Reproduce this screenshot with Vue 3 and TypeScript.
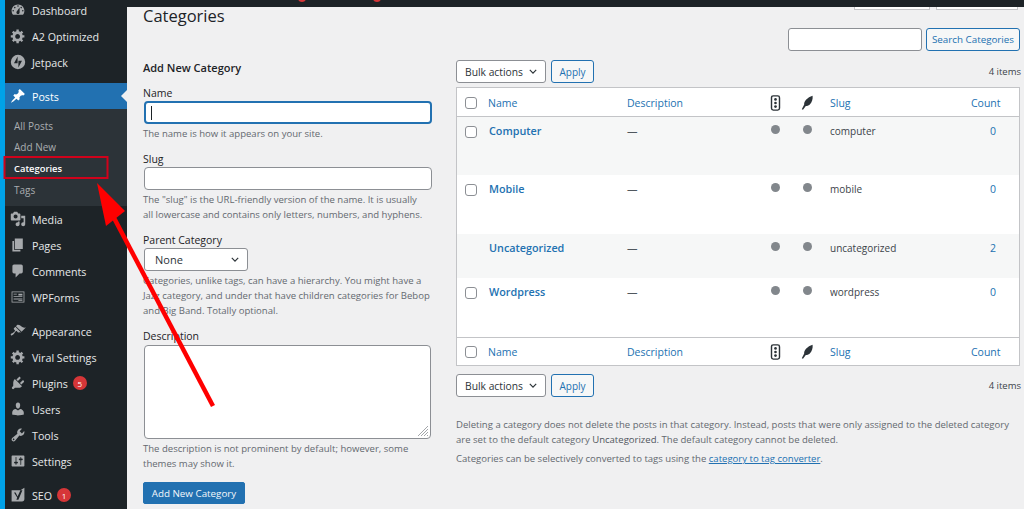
<script setup lang="ts">
interface MenuItem {
  label: string;
  icon: string;
  gapBefore?: boolean;
  badge?: string;
  active?: boolean;
  rule?: "evenodd";
}

const gear =
  "M18 12h-2.18c-.17.7-.44 1.35-.81 1.93l1.54 1.54-2.1 2.1-1.54-1.54c-.58.36-1.23.63-1.91.79V19H8v-2.18c-.68-.16-1.33-.43-1.91-.79l-1.54 1.54-2.12-2.12 1.54-1.54c-.36-.58-.63-1.23-.79-1.91H1V9.03h2.17c.16-.7.44-1.35.8-1.94L2.43 5.55l2.1-2.1 1.54 1.54c.58-.37 1.24-.64 1.93-.81V2h3v2.18c.68.16 1.33.43 1.91.79l1.54-1.54 2.12 2.12-1.54 1.54c.36.59.64 1.24.8 1.94H18V12zm-8.5 1.5c1.66 0 3-1.34 3-3s-1.34-3-3-3-3 1.34-3 3 1.34 3 3 3z";

const topMenu: MenuItem[] = [
  { label: "Dashboard", icon: "M3.76 16h12.48c1.1-1.37 1.76-3.11 1.76-5 0-4.42-3.58-8-8-8s-8 3.58-8 8c0 1.89.66 3.63 1.76 5zM10 4c.55 0 1 .45 1 1s-.45 1-1 1-1-.45-1-1 .45-1 1-1zM6 6c.55 0 1 .45 1 1s-.45 1-1 1-1-.45-1-1 .45-1 1-1zm8 0c.55 0 1 .45 1 1s-.45 1-1 1-1-.45-1-1 .45-1 1-1zm-5.37 5.55L12 7v6c0 1.1-.9 2-2 2s-2-.9-2-2c0-.57.24-1.08.63-1.45zM4 10c.55 0 1 .45 1 1s-.45 1-1 1-1-.45-1-1 .45-1 1-1zm12 0c.55 0 1 .45 1 1s-.45 1-1 1-1-.45-1-1 .45-1 1-1z" },
  { label: "A2 Optimized", icon: gear },
  { label: "Jetpack", icon: "M10 1a9 9 0 1 0 0 18 9 9 0 0 0 0-18zM9.5 11.5H5L9.5 3v8.5zm1 5.5V8.5H15L10.5 17z", rule: "evenodd" },
  { label: "Posts", gapBefore: true, active: true, icon: "M10.44 3.02l1.82-1.82 6.36 6.35-1.83 1.82c-1.05-.68-2.48-.57-3.41.36l-.75.75c-.92.93-1.04 2.35-.35 3.41l-1.83 1.82-2.41-2.41-2.8 2.79c-.42.42-3.38 2.71-3.8 2.29s1.86-3.39 2.28-3.81l2.79-2.79L4.1 9.36l1.83-1.82c1.05.69 2.48.57 3.4-.36l.75-.75c.93-.92 1.05-2.35.36-3.41z" },
];

const bottomMenu: MenuItem[] = [
  { label: "Media", icon: "M13 11V4c0-.55-.45-1-1-1h-1.67L9 1H5L3.67 3H2c-.55 0-1 .45-1 1v7c0 .55.45 1 1 1h10c.55 0 1-.45 1-1zM7 4.5c1.38 0 2.5 1.12 2.5 2.5S8.38 9.5 7 9.5 4.5 8.38 4.5 7 5.62 4.5 7 4.5zM14 6h5v10.5c0 1.38-1.12 2.5-2.5 2.5S14 17.88 14 16.5s1.12-2.5 2.5-2.5c.17 0 .34.02.5.05V9h-3V6zm-4 8.05V13h2v3.5c0 1.38-1.12 2.5-2.5 2.5S7 17.88 7 16.5 8.12 14 9.5 14c.17 0 .34.02.5.05z" },
  { label: "Pages", icon: "M6 15V2h10v13H6zm-1 1h8v2H3V5h2v11z" },
  { label: "Comments", icon: "M5 2h9c1.1 0 2 .9 2 2v7c0 1.1-.9 2-2 2h-2l-5 5v-5H5c-1.1 0-2-.9-2-2V4c0-1.1.9-2 2-2z" },
  { label: "WPForms", rule: "evenodd", icon: "M2 3h16v14H2zM3 4v12h14V4zM4.5 6h4v1h-4zm6 0h5v2h-5zm-6 3h11v1h-11zm0 3h11v1h-11zm6 2h5v1h-5z" },
  { label: "Appearance", gapBefore: true, icon: "M14.48 11.06L7.41 3.99l1.5-1.5c.5-.56 2.3-.47 3.51.32 1.21.8 1.43 1.28 2.91 2.1 1.18.64 2.45 1.26 4.45.85zm-.71.71L6.7 4.7 4.93 6.47c-.39.39-.39 1.02 0 1.41l1.06 1.06c.39.39.39 1.03 0 1.42-.6.6-1.43 1.11-2.21 1.69-.35.26-.7.53-1.01.84C1.43 13.23.4 14.4 1.21 15.2c.8.8 2.18-.2 3.53-1.55.31-.31.58-.66.84-1.01.58-.78 1.09-1.61 1.69-2.21.39-.39 1.02-.39 1.41 0l1.06 1.06c.39.39 1.02.39 1.41 0z" },
  { label: "Viral Settings", icon: gear },
  { label: "Plugins", badge: "5", icon: "M13.11 4.36L9.87 7.6 8 5.73l3.24-3.24c.35-.34 1.05-.2 1.56.32.52.51.66 1.21.31 1.55zm-8 1.77l.91-1.12 9.01 9.01-1.19.84c-.71.71-2.63 1.16-3.82 1.16H6.14L4.9 17.26c-.59.59-1.54.59-2.12 0-.59-.58-.59-1.53 0-2.12l1.24-1.24v-3.88c0-1.13.4-3.19 1.09-3.89zm7.26 3.97l3.24-3.24c.34-.35 1.04-.21 1.55.31.52.51.66 1.21.31 1.55l-3.24 3.25z" },
  { label: "Users", icon: "M10 9.25c-2.27 0-2.73-3.44-2.73-3.44C7 4.02 7.82 2 9.97 2c2.16 0 2.98 2.02 2.71 3.81 0 0-.41 3.44-2.68 3.44zm0 2.57L12.72 10c2.39 0 4.52 2.33 4.52 4.53v2.49s-3.65 1.13-7.24 1.13c-3.65 0-7.24-1.13-7.24-1.13v-2.49c0-2.25 1.94-4.48 4.47-4.48z" },
  { label: "Tools", icon: "M16.68 9.77c-1.34 1.34-3.3 1.67-4.95.99l-5.41 6.52c-.99.99-2.59.99-3.58 0s-.99-2.59 0-3.57l6.52-5.42c-.68-1.65-.35-3.61.99-4.95 1.28-1.28 3.12-1.62 4.72-1.06l-2.89 2.89 2.82 2.82 2.86-2.87c.53 1.58.18 3.39-1.08 4.65zM3.81 16.21c.4.39 1.04.39 1.43 0 .4-.4.4-1.04 0-1.43-.39-.4-1.03-.4-1.43 0-.39.39-.39 1.03 0 1.43z" },
  { label: "Settings", icon: "M18 16V4c0-.55-.45-1-1-1H3c-.55 0-1 .45-1 1v12c0 .55.45 1 1 1h14c.55 0 1-.45 1-1zM8 11h1c.55 0 1 .45 1 1s-.45 1-1 1H8v1.5c0 .28-.22.5-.5.5s-.5-.22-.5-.5V13H6c-.55 0-1-.45-1-1s.45-1 1-1h1V5.5c0-.28.22-.5.5-.5s.5.22.5.5V11zm5-2h-1c-.55 0-1-.45-1-1s.45-1 1-1h1V5.5c0-.28.22-.5.5-.5s.5.22.5.5V7h1c.55 0 1 .45 1 1s-.45 1-1 1h-1v5.5c0 .28-.22.5-.5.5s-.5-.22-.5-.5V9z" },
  { label: "SEO", gapBefore: true, badge: "1", rule: "evenodd", icon: "M2 4h11l5-3v14c0 1.5-1 3-3 3H2zM7 7l2.5 5L13 4h2.5l-5 12H8l1-3-4-6z" },
];

const subMenu = ["All Posts", "Add New", "Categories", "Tags"];

const categories = [
  { name: "Computer", slug: "computer", count: 0, rowClass: "row-a alt", check: true },
  { name: "Mobile", slug: "mobile", count: 0, rowClass: "row-b", check: true },
  { name: "Uncategorized", slug: "uncategorized", count: 2, rowClass: "row-c alt", check: false },
  { name: "Wordpress", slug: "wordpress", count: 0, rowClass: "row-b", check: true },
];

const featherPath = "M17 1c.5 4-.8 8.500-3.500 11-1.700 1.500-3.500 2-5 1.800L5 18.500l-1.500-.8L6.500 12C6 8 10.500 3 17 1z";
</script>

<template>
  <div class="page">
    <div class="edge"></div>

    <aside class="sidebar">
      <ul class="menu">
        <li v-for="item in topMenu" :key="item.label" :class="['menu-item', { gap: item.gapBefore, active: item.active }]">
          <svg class="menu-icon" viewBox="0 0 20 20"><path :d="item.icon" :fill-rule="item.rule" /></svg>
          <span class="menu-label">{{ item.label }}</span>
        </li>
      </ul>
      <ul class="submenu">
        <li v-for="sub in subMenu" :key="sub" :class="{ current: sub === 'Categories' }">{{ sub }}</li>
      </ul>
      <ul class="menu">
        <li v-for="item in bottomMenu" :key="item.label" :class="['menu-item', { gap: item.gapBefore }]">
          <svg class="menu-icon" viewBox="0 0 20 20"><path :d="item.icon" :fill-rule="item.rule" /></svg>
          <span class="menu-label">{{ item.label }}</span>
          <b v-if="item.badge" class="badge">{{ item.badge }}</b>
        </li>
      </ul>
    </aside>

    <div class="main">
      <div class="adminbar">
        <i class="bar-dot dot-a"></i>
        <i class="bar-dot dot-b"></i>
      </div>
      <div class="screen-tabs">
        <span class="tab tab-a"></span>
        <span class="tab tab-b"></span>
      </div>

      <div class="content">
        <h1 class="title">Categories</h1>

        <div class="columns">
          <form class="col-left" @submit.prevent>
            <h2 class="add-title">Add New Category</h2>

            <label class="field-label">Name</label>
            <div class="input focused"><span class="caret"></span></div>
            <p class="help">The name is how it appears on your site.</p>

            <label class="field-label spaced">Slug</label>
            <div class="input"></div>
            <p class="help">The "slug" is the URL-friendly version of the name. It is usually<br />all lowercase and contains only letters, numbers, and hyphens.</p>

            <label class="field-label spaced">Parent Category</label>
            <div class="select parent">None<svg class="chev" viewBox="0 0 10 6"><path d="M1 1l4 4 4-4" /></svg></div>
            <p class="help">Categories, unlike tags, can have a hierarchy. You might have a Jazz category, and under that have children categories for Bebop and Big Band. Totally optional.</p>

            <label class="field-label spaced">Description</label>
            <div class="textarea">
              <svg class="grip" viewBox="0 0 12 12"><path d="M11 1L1 11M11 4L4 11M11 7L7 11M11 10l-1 1" /></svg>
            </div>
            <p class="help">The description is not prominent by default; however, some themes may show it.</p>

            <button class="primary" type="button">Add New Category</button>
          </form>

          <div class="col-right">
            <div class="search">
              <div class="search-input"></div>
              <button class="secondary search-btn" type="button">Search Categories</button>
            </div>

            <div class="tablenav">
              <div class="select bulk">Bulk actions<svg class="chev" viewBox="0 0 10 6"><path d="M1 1l4 4 4-4" /></svg></div>
              <button class="secondary" type="button">Apply</button>
              <span class="count-label">4 items</span>
            </div>

            <table class="cats">
              <thead>
                <tr>
                  <th class="c-check"><span class="box"></span></th>
                  <th class="c-name">Name</th>
                  <th class="c-desc">Description</th>
                  <th class="c-dot"><svg class="th-icon" viewBox="0 0 12 18"><rect x="1.500" y="1" width="9" height="16" rx="2" fill="none" stroke="#2c3338" stroke-width="1.600" /><circle cx="6" cy="5" r="1.500" /><circle cx="6" cy="9" r="1.500" /><circle cx="6" cy="13" r="1.500" /></svg></th>
                  <th class="c-dot"><svg class="th-icon feather" viewBox="0 0 20 20"><path :d="featherPath" /></svg></th>
                  <th class="c-slug">Slug</th>
                  <th class="c-count">Count</th>
                </tr>
              </thead>
              <tbody>
                <tr v-for="cat in categories" :key="cat.name" :class="cat.rowClass">
                  <td class="c-check"><span v-if="cat.check" class="box"></span></td>
                  <td class="c-name"><a class="cat-link">{{ cat.name }}</a></td>
                  <td class="c-desc dash">—</td>
                  <td class="c-dot"><i class="dot"></i></td>
                  <td class="c-dot"><i class="dot"></i></td>
                  <td class="c-slug slug-text">{{ cat.slug }}</td>
                  <td class="c-count num">{{ cat.count }}</td>
                </tr>
              </tbody>
              <tfoot>
                <tr>
                  <th class="c-check"><span class="box"></span></th>
                  <th class="c-name">Name</th>
                  <th class="c-desc">Description</th>
                  <th class="c-dot"><svg class="th-icon" viewBox="0 0 12 18"><rect x="1.500" y="1" width="9" height="16" rx="2" fill="none" stroke="#2c3338" stroke-width="1.600" /><circle cx="6" cy="5" r="1.500" /><circle cx="6" cy="9" r="1.500" /><circle cx="6" cy="13" r="1.500" /></svg></th>
                  <th class="c-dot"><svg class="th-icon feather" viewBox="0 0 20 20"><path :d="featherPath" /></svg></th>
                  <th class="c-slug">Slug</th>
                  <th class="c-count">Count</th>
                </tr>
              </tfoot>
            </table>

            <div class="tablenav lower">
              <div class="select bulk">Bulk actions<svg class="chev" viewBox="0 0 10 6"><path d="M1 1l4 4 4-4" /></svg></div>
              <button class="secondary" type="button">Apply</button>
              <span class="count-label">4 items</span>
            </div>

            <div class="notes">
              <p>Deleting a category does not delete the posts in that category. Instead, posts that were only assigned to the deleted category are set to the default category <strong>Uncategorized</strong>. The default category cannot be deleted.</p>
              <p class="note-second">Categories can be selectively converted to tags using the <a>category to tag converter</a>.</p>
            </div>
          </div>
        </div>
      </div>
    </div>

    <!-- annotation drawn over the screenshot -->
    <svg class="annotation" viewBox="0 0 1024 509">
      <rect x="4.500" y="157" width="103" height="21" fill="none" stroke="#d0021b" stroke-width="2" />
      <path d="M213 406L113 216" stroke="#f00" stroke-width="4.500" fill="none" />
      <path d="M97 183L125 211L106 226z" fill="#f00" />
    </svg>
  </div>
</template>

<style>
html,
body {
  margin: 0;
  background: #f0f0f1;
}
</style>

<style scoped>
.page {
  position: relative;
  display: flex;
  width: 1024px;
  height: 509px;
  overflow: hidden;
  font-family: "Open Sans", "Noto Sans", sans-serif;
  font-size: 10.5px;
  color: #3c434a;
  background: #f0f0f1;
}

.edge {
  flex: none;
  width: 5px;
  background: #00a2e8;
}

.sidebar {
  flex: none;
  width: 122px;
  background: #1d2327;
  color: #e6e8e9;
}

.menu,
.submenu {
  list-style: none;
  margin: 0;
  padding: 0;
}

.sidebar > .menu:first-child {
  margin-top: -3px;
}

.menu-item {
  position: relative;
  display: flex;
  align-items: center;
  height: 26px;
  padding-left: 5px;
  font-size: 10.7px;
}

.menu-item.gap {
  margin-top: 8px;
}

.menu-label {
  margin-top: 2px;
}

.menu-icon {
  flex: none;
  width: 16px;
  height: 16px;
  margin-right: 6px;
  fill: #a7aaad;
}

.menu-item.active {
  background: #2271b1;
  color: #fff;
}

.menu-item.active .menu-icon {
  fill: #fff;
}

.menu-item.active::after {
  content: "";
  position: absolute;
  right: 0;
  top: 7px;
  border: 6px solid transparent;
  border-right-color: #f0f0f1;
}

.badge {
  display: inline-flex;
  align-items: center;
  justify-content: center;
  width: 14px;
  height: 14px;
  margin-left: 5px;
  border-radius: 50%;
  background: #d63638;
  color: #fff;
  font-size: 8px;
  font-weight: 400;
}

.submenu {
  height: 97px;
  padding-top: 7px;
  box-sizing: border-box;
  background: #2c3338;
  color: #a9adb0;
  font-size: 10px;
}

.submenu li {
  height: 21.300px;
  line-height: 21.300px;
  padding-left: 9px;
}

.submenu .current {
  color: #fff;
  font-size: 9.400px;
  font-weight: 600;
  line-height: 20px;
}

.main {
  position: relative;
  flex: 1;
  min-width: 0;
}

.adminbar {
  position: relative;
  height: 7px;
  overflow: hidden;
  background: #1d2327;
}

.bar-dot {
  position: absolute;
  top: -6px;
  width: 8px;
  height: 8px;
  border-radius: 50%;
  background: #d63638;
}

.dot-a {
  left: 171px;
}

.dot-b {
  left: 246px;
}

.screen-tabs .tab {
  position: absolute;
  top: 7px;
  height: 3px;
  box-sizing: border-box;
  border: 1px solid #c3c4c7;
  border-top: 0;
  background: #fff;
}

.tab-a {
  left: 727px;
  width: 76px;
}

.tab-b {
  left: 809px;
  width: 82px;
}

.content {
  padding: 0 4px 0 16px;
}

.title {
  margin: 0;
  height: 21px;
  font-size: 16.500px;
  font-weight: 400;
  line-height: 17px;
  color: #1d2327;
}

.columns {
  display: flex;
}

.col-left {
  flex: none;
  width: 289px;
  margin-right: 24px;
  padding-top: 32px;
}

.col-right {
  flex: 1;
  min-width: 0;
}

.add-title {
  margin: 0 0 10px;
  font-size: 11px;
  font-weight: 600;
  line-height: 16px;
  color: #1d2327;
}

.field-label {
  display: block;
  height: 14px;
  line-height: 14px;
  color: #1d2327;
}

.field-label.spaced {
  margin-top: 11px;
}

.input {
  display: flex;
  align-items: center;
  height: 23px;
  margin: 1px 0 0 1px;
  box-sizing: border-box;
  border: 1px solid #8c8f94;
  border-radius: 4px;
  background: #fff;
}

.input.focused {
  border: 2px solid #2271b1;
}

.caret {
  width: 1px;
  height: 14px;
  margin-left: 5px;
  background: #1d2327;
}

.help {
  margin: 2px 0 0;
  font-size: 9.550px;
  line-height: 15px;
  color: #646970;
}

.select {
  position: relative;
  display: flex;
  align-items: center;
  box-sizing: border-box;
  height: 23px;
  border: 1px solid #8c8f94;
  border-radius: 3px;
  background: #fff;
  color: #2c3338;
}

.select.parent {
  width: 104px;
  margin: 1px 0 0 1px;
  padding-left: 10px;
  font-size: 11px;
}

.select.bulk {
  width: 90px;
  padding-left: 8px;
  font-size: 10.300px;
}

.chev {
  position: absolute;
  right: 8px;
  top: 8px;
  width: 8px;
  height: 5px;
  fill: none;
  stroke: #2c3338;
  stroke-width: 1.500;
}

.textarea {
  position: relative;
  height: 94px;
  width: 287px;
  margin: 2px 0 0 1px;
  box-sizing: border-box;
  border: 1px solid #8c8f94;
  border-radius: 4px;
  background: #fff;
}

.grip {
  position: absolute;
  right: 1px;
  bottom: 1px;
  width: 12px;
  height: 12px;
  fill: none;
  stroke: #8c8f94;
  stroke-width: 0.800;
}

.primary {
  display: block;
  width: 102px;
  height: 22px;
  margin-top: 11px;
  padding: 0;
  border: 1px solid #2271b1;
  border-radius: 2px;
  background: #2271b1;
  color: #f2f7fb;
  font: inherit;
  font-size: 9.800px;
}

.secondary {
  height: 23px;
  padding: 0 7px;
  border: 1px solid #2271b1;
  border-radius: 3px;
  background: #f6f7f7;
  color: #2271b1;
  font: inherit;
  font-size: 10px;
}

.search {
  display: flex;
  justify-content: flex-end;
  gap: 4px;
}

.search-input {
  box-sizing: border-box;
  width: 134px;
  height: 23px;
  border: 1px solid #8c8f94;
  border-radius: 3px;
  background: #fff;
}

.search-btn {
  width: 94px;
  padding: 0;
  font-size: 9.800px;
}

.tablenav {
  display: flex;
  align-items: center;
  gap: 5px;
  margin-top: 9px;
}

.tablenav .secondary {
  width: 43px;
  padding: 0;
}

.count-label {
  margin-left: auto;
  margin-right: -1px;
  font-size: 9.500px;
}

.tablenav.lower {
  margin-top: 8px;
}

.cats {
  width: 564px;
  margin-top: 4px;
  border: 1px solid #c3c4c7;
  border-spacing: 0;
  border-collapse: separate;
  table-layout: fixed;
  background: #fff;
}

.cats th {
  height: 28px;
  padding: 0;
  font-weight: 400;
  text-align: left;
  color: #2271b1;
  vertical-align: middle;
}

.cats thead th {
  height: 29px;
  padding-top: 2px;
  border-bottom: 1px solid #c3c4c7;
}

.cats tfoot th {
  border-top: 1px solid #c3c4c7;
}

.cats td {
  padding: 7px 0 0;
  vertical-align: top;
  line-height: 15px;
}

.alt td {
  background: #f6f7f7;
}

/* cells are border-box, so these heights include the padding */
.row-a td {
  height: 58px;
}

.row-b td {
  height: 59px;
}

.row-c td {
  height: 44px;
}

.c-check {
  width: 25px;
  padding-left: 8px !important;
  box-sizing: border-box;
}

.c-name {
  width: 139px;
  padding-left: 6px !important;
  box-sizing: border-box;
}

.cats td.c-name {
  padding-top: 6px;
  padding-left: 7px !important;
}

.c-desc {
  width: 139px;
  padding-left: 6px !important;
  box-sizing: border-box;
}

.c-dot {
  width: 32px;
  padding-right: 2px !important;
  box-sizing: border-box;
  text-align: center !important;
}

.c-slug {
  width: 141px;
  padding-left: 6px !important;
  box-sizing: border-box;
}

.c-count {
  padding-left: 6px !important;
  box-sizing: border-box;
}

.box {
  display: block;
  box-sizing: border-box;
  width: 12px;
  height: 12px;
  border: 1px solid #8c8f94;
  border-radius: 3px;
  background: #fff;
}

.cats td .box {
  margin-top: 2px;
}

.cat-link {
  font-size: 10.800px;
  font-weight: 600;
  color: #2271b1;
}

.dash {
  color: #50575e;
}

.slug-text {
  font-size: 10px;
}

.num {
  padding-left: 25px !important;
  color: #2271b1;
}

.dot {
  display: block;
  width: 9px;
  height: 9px;
  margin: 1px auto 0;
  border-radius: 50%;
  background: #82878c;
}

.th-icon {
  display: block;
  width: 11px;
  height: 16px;
  margin: 0 auto;
  fill: #2c3338;
}

.th-icon.feather {
  width: 16px;
}

.notes {
  margin-top: 20px;
  font-size: 9.550px;
  line-height: 15px;
  color: #646970;
}

.notes p {
  margin: 0;
}

.notes .note-second {
  margin-top: 4px;
}

.notes strong {
  font-weight: 400;
  color: #50575e;
}

.notes a {
  color: #2271b1;
  text-decoration: underline;
}

.annotation {
  position: absolute;
  left: 0;
  top: 0;
  width: 1024px;
  height: 509px;
  pointer-events: none;
}
</style>
